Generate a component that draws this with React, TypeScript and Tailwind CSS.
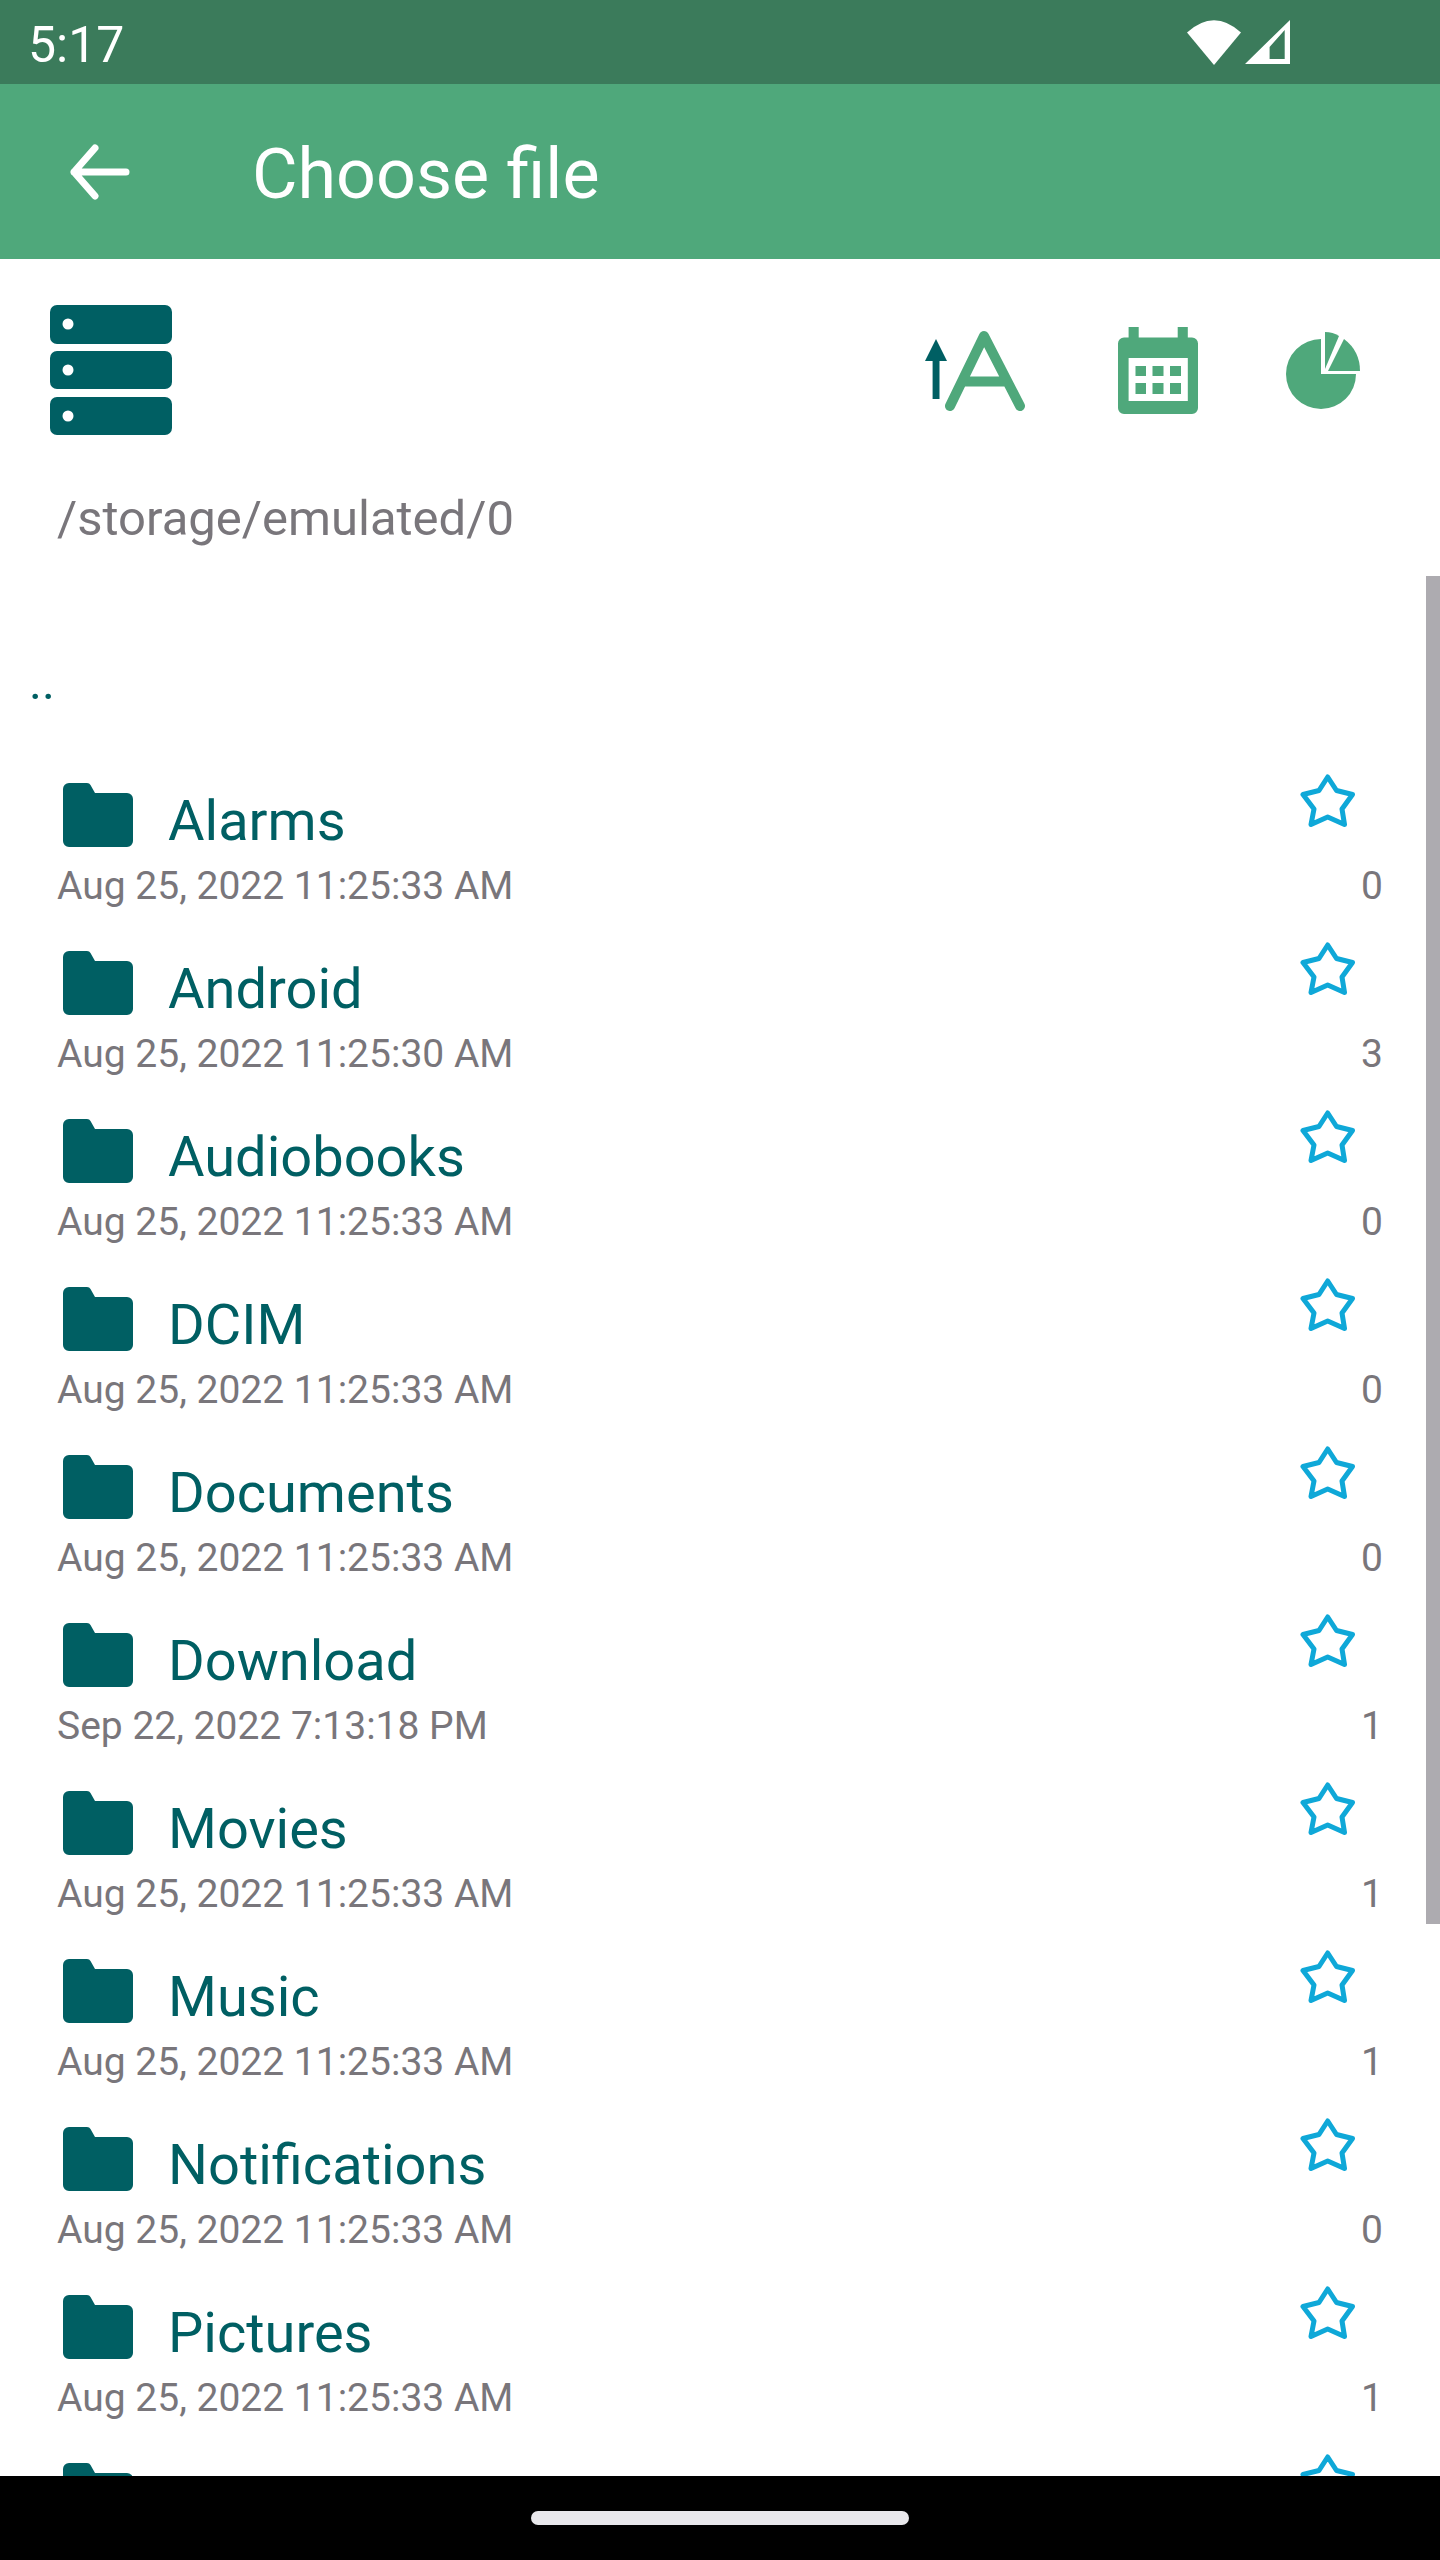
// App.tsx
const folders = [
  { name: "Alarms", date: "Aug 25, 2022 11:25:33 AM", count: 0 },
  { name: "Android", date: "Aug 25, 2022 11:25:30 AM", count: 3 },
  { name: "Audiobooks", date: "Aug 25, 2022 11:25:33 AM", count: 0 },
  { name: "DCIM", date: "Aug 25, 2022 11:25:33 AM", count: 0 },
  { name: "Documents", date: "Aug 25, 2022 11:25:33 AM", count: 0 },
  { name: "Download", date: "Sep 22, 2022 7:13:18 PM", count: 1 },
  { name: "Movies", date: "Aug 25, 2022 11:25:33 AM", count: 1 },
  { name: "Music", date: "Aug 25, 2022 11:25:33 AM", count: 1 },
  { name: "Notifications", date: "Aug 25, 2022 11:25:33 AM", count: 0 },
  { name: "Pictures", date: "Aug 25, 2022 11:25:33 AM", count: 1 },
];

const FolderIcon = () => (
  <svg className="ml-[6px] mt-[21px] w-[70px] h-[64px] shrink-0 fill-[#005f63]" viewBox="0 0 70 64">
    <path d="M6 0H24q2.500 0 3.500 2L32 10H64a6 6 0 0 1 6 6V58a6 6 0 0 1-6 6H6a6 6 0 0 1-6-6V6a6 6 0 0 1 6-6z" />
  </svg>
);

const StarIcon = () => (
  <svg className="ml-auto mt-[11px] mr-[27px] w-[56px] h-[56px] shrink-0" viewBox="0 0 56 56" fill="none">
    <path
      d="M27.700 4L36.500 17.500L52.500 21.500L42 36L44.500 51.500L27.700 44L11 51.500L14 36L3 21.500L19 17.500Z"
      stroke="#0fa8d8"
      strokeWidth="5"
      strokeLinejoin="round"
    />
  </svg>
);

const FolderRow = ({ name, date, count }: { name?: string; date?: string; count?: number }) => (
  <div className="flex flex-col h-[168px] shrink-0 pl-[57px] pr-[57px]">
    <div className="flex items-start h-[99px] shrink-0">
      <FolderIcon />
      {name && <span className="ml-[35px] mt-[26px] text-[56px] leading-[66px] text-[#005f63]">{name}</span>}
      <StarIcon />
    </div>
    {date && (
      <div className="flex justify-between text-[39px] leading-[50px] text-[#79767b]">
        <span>{date}</span>
        <span>{count}</span>
      </div>
    )}
  </div>
);

export default function App() {
  return (
    <div className="flex flex-col h-[2560px] w-[1440px] overflow-hidden bg-white font-['Roboto',sans-serif]">
      <div className="flex items-center justify-between h-[84px] shrink-0 pl-[28px] pr-[150px] bg-[#3b7b5b] text-white">
        <span className="mt-[5px] text-[50px] leading-none">5:17</span>
        <div className="flex items-center gap-[4px]">
          <svg className="w-[54px] h-[45px]" viewBox="0 0 54 45" fill="#fff">
            <path d="M0 12.500Q27-12 54 12.500L27 45Z" />
          </svg>
          <svg className="w-[45px] h-[44px]" viewBox="0 0 45 44" fill="#fff" fillRule="evenodd">
            <path d="M0 44L45 0V44ZM24.600 39H39.700V10L24.600 27Z" />
          </svg>
        </div>
      </div>

      <div className="flex items-center h-[175px] shrink-0 pl-[70px] bg-[#4fa87b] text-white">
        <svg className="w-[60px] h-[56px]" viewBox="0 0 60 56" fill="none" stroke="#fff" strokeWidth="7" strokeLinecap="round" strokeLinejoin="round">
          <path d="M4 28H56M25 4L4 28L25 52" />
        </svg>
        <span className="ml-[122px] mt-[4px] text-[70px] leading-none">Choose file</span>
      </div>

      <div className="relative flex flex-col flex-1 min-h-0 overflow-hidden">
        <div className="flex items-start h-[125px] shrink-0 mt-[46px] pl-[50px]">
          <svg className="w-[122px] h-[130px] shrink-0" viewBox="0 0 122 130">
            <rect y="0" width="122" height="39" rx="7" fill="#005f63" />
            <rect y="46" width="122" height="38" rx="7" fill="#005f63" />
            <rect y="92" width="122" height="38" rx="7" fill="#005f63" />
            <circle cx="18" cy="19" r="5.500" fill="#fff" />
            <circle cx="18" cy="65" r="5.500" fill="#fff" />
            <circle cx="18" cy="111" r="5.500" fill="#fff" />
          </svg>
          <svg className="ml-[752px] mt-[25px] w-[101px] h-[81px] shrink-0" viewBox="0 0 101 81" fill="none">
            <path d="M12 9L1 31H8.600V69H15.500V31H23Z" fill="#005f63" />
            <path d="M26 76L60 6L96 76M40 51.500H82" stroke="#4fa87b" strokeWidth="10" strokeLinecap="round" strokeLinejoin="round" />
          </svg>
          <svg className="ml-[93px] mt-[22px] w-[80px] h-[87px] shrink-0" viewBox="0 0 80 87" fill="#4fa87b">
            <path d="M10.600 0H20.700V10.500H59.700V0H69.800V10.500H74a6 6 0 0 1 6 6V81a6 6 0 0 1-6 6H6a6 6 0 0 1-6-6V16.500a6 6 0 0 1 6-6H10.600Z" />
            <rect x="10.600" y="31" width="59.200" height="43" fill="#fff" />
            <rect x="17.500" y="39" width="10.500" height="10" />
            <rect x="34.500" y="39" width="11" height="10" />
            <rect x="52" y="39" width="11" height="10" />
            <rect x="17.500" y="56" width="10.500" height="11" />
            <rect x="34.500" y="56" width="11" height="11" />
            <rect x="52" y="56" width="11" height="11" />
          </svg>
          <svg className="ml-[88px] mt-[27px] w-[74px] h-[77px] shrink-0" viewBox="0 0 74 77" fill="#4fa87b">
            <path d="M35 7A35 35 0 1 0 70 42H35Z" />
            <path d="M39 37V0Q47 0 53 4Z" />
            <path d="M42 39L58 7Q74 19 74 39Z" />
          </svg>
        </div>

        <div className="shrink-0 pl-[57px] mt-[60px] text-[49px] leading-[58px] text-[#79767b]">/storage/emulated/0</div>
        <div className="shrink-0 pl-[29px] mt-[106px] h-[108px] text-[49px] leading-[58px] text-[#005f63]">..</div>

        <div className="flex flex-col shrink-0">
          {folders.map((f) => (
            <FolderRow key={f.name} {...f} />
          ))}
          <FolderRow />
        </div>

        <div className="absolute right-0 top-[317px] w-[14px] h-[1348px] bg-[#adabb0]" />
      </div>

      <div className="flex items-center justify-center h-[84px] shrink-0 bg-black">
        <div className="w-[378px] h-[14px] rounded-full bg-[#e9e8ec]" />
      </div>
    </div>
  );
}
